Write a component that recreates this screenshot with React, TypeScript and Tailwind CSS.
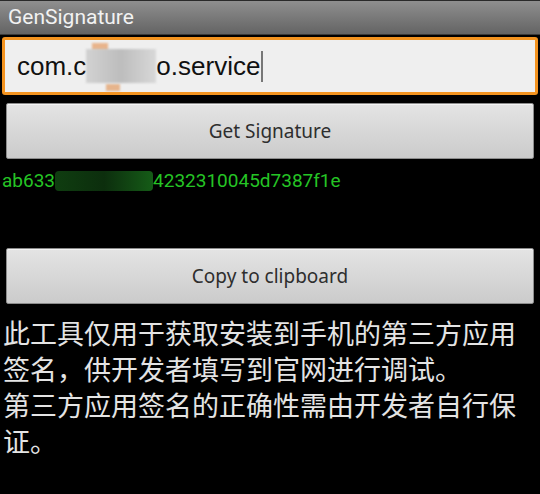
import React from "react";

const roboto = { fontFamily: "Roboto, 'Liberation Sans', sans-serif" };

function GrayButton({ label }: { label: string }) {
  return (
    <button
      className="mx-[6px] h-[56px] w-[528px] rounded-[2px] border border-[#8c8c8c] bg-gradient-to-b from-[#e4e4e4] to-[#cbcbcb] text-[19px] text-[#2e2e2e] shadow-[inset_0_1px_0_#f4f4f4]"
      style={{ fontFamily: "'Noto Sans', 'Open Sans', sans-serif" }}
    >
      {label}
    </button>
  );
}

export default function App() {
  return (
    <div className="w-[540px] h-[494px] overflow-hidden bg-black flex flex-col">
      {/* title bar */}
      <div
        className="h-[35px] shrink-0 border-t border-[#2a2a2a] border-b border-b-[#3a3a3a] bg-gradient-to-b from-[#8f8f8f] to-[#646464] pl-[8px] flex items-center text-[21px] text-[#f2f2f2]"
        style={roboto}
      >
        GenSignature
      </div>

      {/* package input */}
      <div className="mx-[2px] mt-[2px] h-[58px] rounded-[3px] border-[3px] border-[#f3931f] bg-[#efefef] flex items-center pl-[12px]">
        <div
          className="flex items-center text-[26px] text-[#111]"
          style={{ fontFamily: "'Liberation Sans', Arial, sans-serif" }}
        >
          <span>com.c</span>
          <span className="relative inline-block w-[70px] h-[34px]">
            <span className="absolute left-[6px] -top-[6px] w-[16px] h-[8px] bg-[#e8b48c] blur-[1px]" />
            <span className="absolute left-[20px] bottom-[-8px] w-[14px] h-[7px] bg-[#e6b48c] blur-[1px]" />
            <span className="absolute inset-0 bg-gradient-to-r from-[#d2d2d2] via-[#bdbdbd] to-[#d8d8d8] blur-[1px]" />
          </span>
          <span>o.service</span>
          <span className="ml-[1px] inline-block w-[2px] h-[31px] bg-[#777]" />
        </div>
      </div>

      {/* get signature */}
      <div className="mt-[8px]">
        <GrayButton label="Get Signature" />
      </div>

      {/* signature result */}
      <div
        className="mt-[10px] pl-[2px] h-[24px] flex items-center text-[19px] leading-[24px] text-[#25c425]"
        style={roboto}
      >
        <span>ab633</span>
        <span className="inline-block w-[98px] h-[20px] rounded-[4px] bg-gradient-to-r from-[#0f3d10] via-[#0c2e0d] to-[#155c17]" />
        <span>4232310045d7387f1e</span>
      </div>

      {/* copy */}
      <div className="mt-[55px]">
        <GrayButton label="Copy to clipboard" />
      </div>

      {/* notice */}
      <div
        className="mt-[11px] pl-[3px] w-[525px] text-[27px] leading-[36px] text-[#e4e4e4]"
        style={{ fontFamily: "'Noto Sans CJK SC', 'Noto Sans', sans-serif" }}
      >
        <p>此工具仅用于获取安装到手机的第三方应用签名，供开发者填写到官网进行调试。</p>
        <p>第三方应用签名的正确性需由开发者自行保证。</p>
      </div>
    </div>
  );
}
